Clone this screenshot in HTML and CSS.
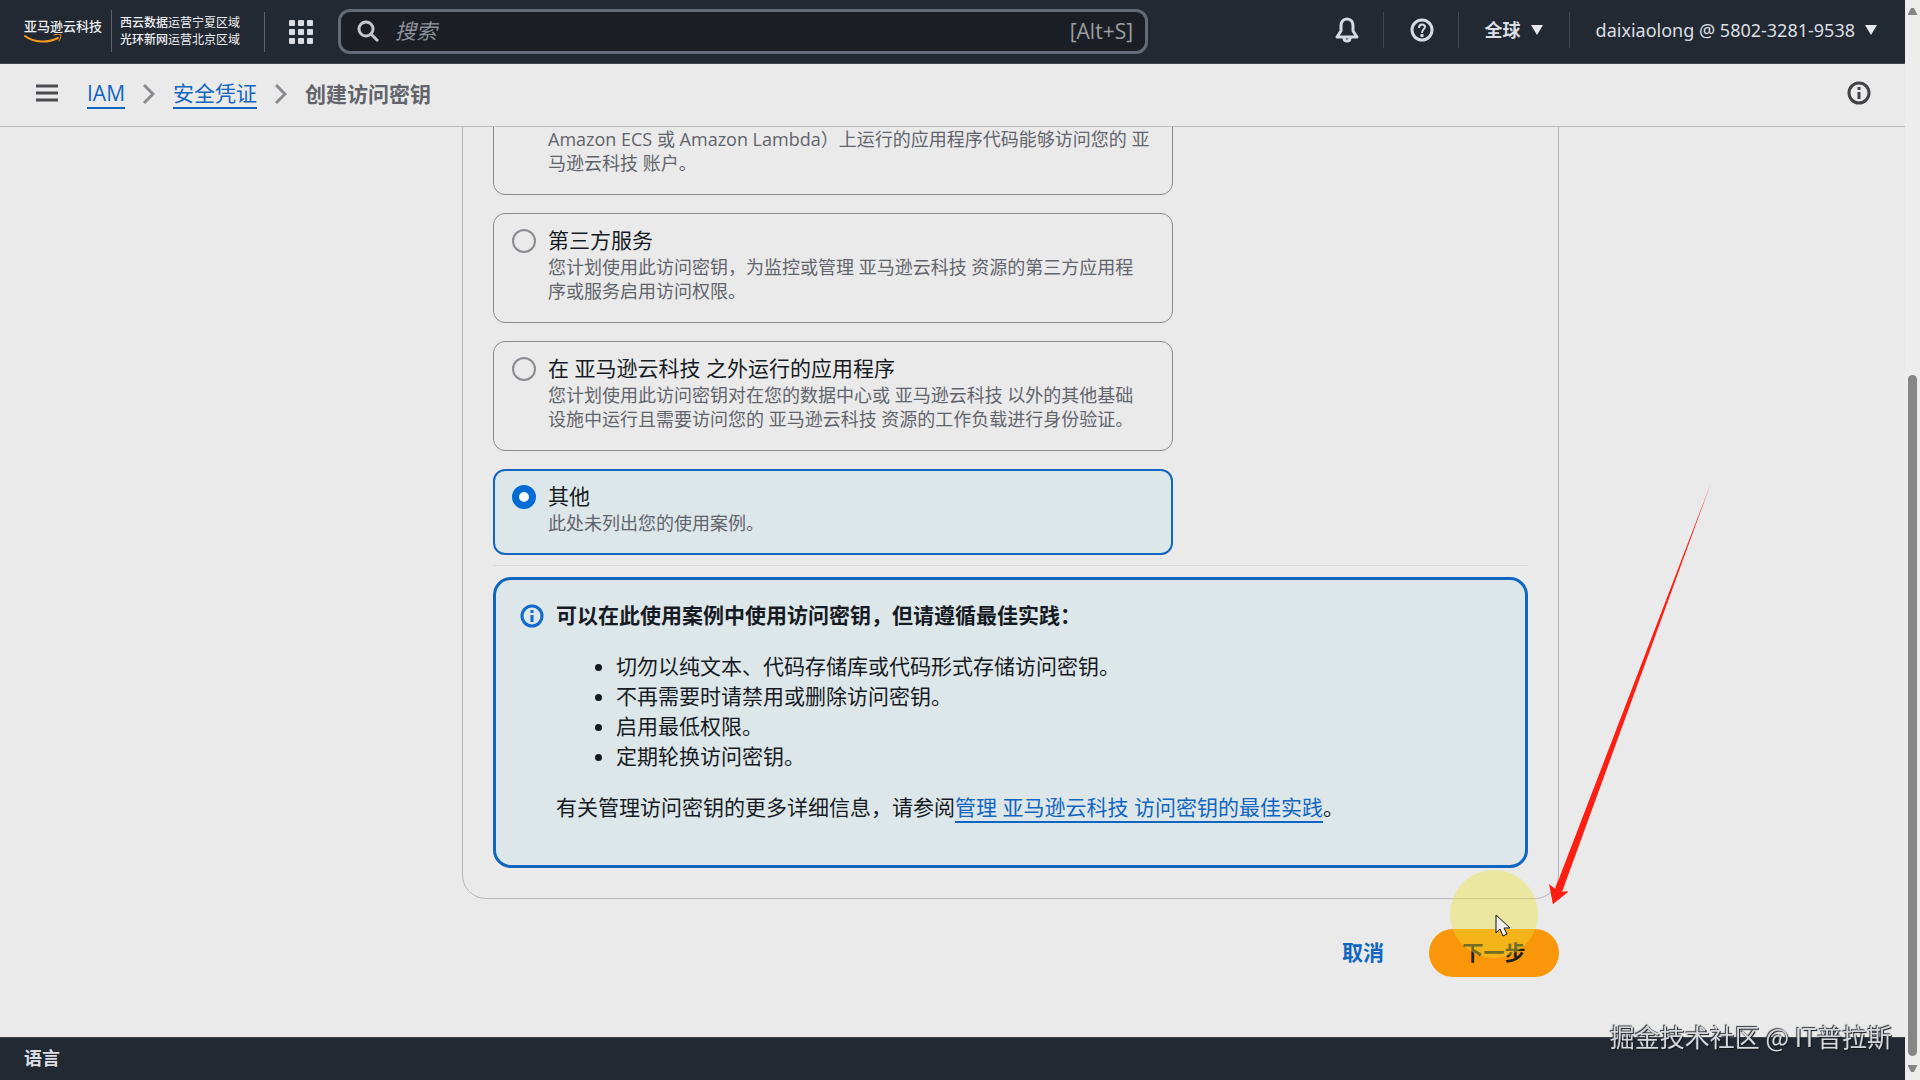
FILE: index.html
```html
<!DOCTYPE html>
<html lang="zh-CN">
<head>
<meta charset="UTF-8">
<meta name="viewport" content="width=device-width, initial-scale=1.0">
<title>创建访问密钥</title>
<link rel="stylesheet" href="styles.css">
</head>
<body>

<div class="page">
  <header class="topnav">
    <a class="brand" href="#">
      <span class="logo">
        亚马逊云科技
        <svg width="38" height="10" viewBox="0 0 38 10" fill="none" stroke="#f79a1b" stroke-linecap="round">
          <path d="M1 2C10 9 24 9 34 4" stroke-width="2"/>
          <path d="M30 1C33 0 36 0 37 1C37 3 36 5 35 7" stroke-width="1"/>
        </svg>
      </span>
      <span class="regions">
        <span><b>西云数据</b>运营宁夏区域</span>
        <span><b>光环新网</b>运营北京区域</span>
      </span>
    </a>
    <button class="nav-btn apps" aria-label="服务">
      <svg width="24" height="24" viewBox="0 0 24 24" fill="#d9dce3">
        <rect x="0" y="0" width="6" height="6" rx="1"/><rect x="9" y="0" width="6" height="6" rx="1"/><rect x="18" y="0" width="6" height="6" rx="1"/>
        <rect x="0" y="9" width="6" height="6" rx="1"/><rect x="9" y="9" width="6" height="6" rx="1"/><rect x="18" y="9" width="6" height="6" rx="1"/>
        <rect x="0" y="18" width="6" height="6" rx="1"/><rect x="9" y="18" width="6" height="6" rx="1"/><rect x="18" y="18" width="6" height="6" rx="1"/>
      </svg>
    </button>
    <div class="search">
      <svg width="22" height="22" viewBox="0 0 22 22" fill="none" stroke="#c3c6cc" stroke-width="3">
        <circle cx="9" cy="9" r="7"/><path d="M14 14L21 21"/>
      </svg>
      <input type="text" placeholder="搜索" aria-label="搜索">
      <span class="shortcut">[Alt+S]</span>
    </div>
    <div class="nav-right">
      <button class="nav-btn" aria-label="通知">
        <svg width="24" height="26" viewBox="0 0 24 26" fill="none" stroke="#d5dae3" stroke-width="3" stroke-linejoin="round">
          <path d="M12 2C8 2 6 5 6 9V14L2 20H22L18 14V9C18 5 16 2 12 2Z"/><path d="M9 21C9 25 15 25 15 21"/>
        </svg>
      </button>
      <button class="nav-btn" aria-label="帮助">
        <svg width="24" height="24" viewBox="0 0 24 24" fill="none" stroke="#d5dae3" stroke-width="3">
          <circle cx="12" cy="12" r="10"/><path d="M9 10C9 5 15 6 15 9C15 11 12 11 12 15" stroke-width="2"/><path d="M12 16V19"/>
        </svg>
      </button>
      <button class="nav-btn region"><b>全球</b>
        <svg width="12" height="10" viewBox="0 0 12 10"><path d="M0 0H12L6 10Z" fill="#e6e8ec"/></svg>
      </button>
      <button class="nav-btn account">daixiaolong @ 5802-3281-9538
        <svg width="12" height="10" viewBox="0 0 12 10"><path d="M0 0H12L6 10Z" fill="#e6e8ec"/></svg>
      </button>
    </div>
  </header>

  <nav class="crumbs" aria-label="导航">
    <button class="icon-btn menu" aria-label="菜单">
      <svg width="22" height="18" viewBox="0 0 22 18" stroke="#4a4a4f" stroke-width="3"><path d="M0 2H22M0 9H22M0 16H22"/></svg>
    </button>
    <a href="#">IAM</a>
    <svg class="chevron" width="12" height="20" viewBox="0 0 12 20"><path d="M1 1L10 10L1 19"/></svg>
    <a href="#">安全凭证</a>
    <svg class="chevron" width="12" height="20" viewBox="0 0 12 20"><path d="M1 1L10 10L1 19"/></svg>
    <span class="current">创建访问密钥</span>
    <button class="icon-btn info" aria-label="信息">
      <svg width="24" height="24" viewBox="0 0 24 24" fill="none" stroke="#424247" stroke-width="3">
        <circle cx="12" cy="12" r="10"/><path d="M12 6V9M12 11V18"/>
      </svg>
    </button>
  </nav>

  <main class="content">
    <form class="wizard">
      <section class="card">
        <div class="tiles">
          <div class="tile tile-plain">
            <p class="desc">Amazon ECS 或 Amazon Lambda）上运行的应用程序代码能够访问您的 亚马逊云科技 账户。</p>
          </div>
          <label class="tile">
            <input type="radio" name="usecase">
            <span class="tile-text">
              <span class="tile-title">第三方服务</span>
              <span class="desc">您计划使用此访问密钥，为监控或管理 亚马逊云科技 资源的第三方应用程序或服务启用访问权限。</span>
            </span>
          </label>
          <label class="tile">
            <input type="radio" name="usecase">
            <span class="tile-text">
              <span class="tile-title">在 亚马逊云科技 之外运行的应用程序</span>
              <span class="desc">您计划使用此访问密钥对在您的数据中心或 亚马逊云科技 以外的其他基础设施中运行且需要访问您的 亚马逊云科技 资源的工作负载进行身份验证。</span>
            </span>
          </label>
          <label class="tile selected">
            <input type="radio" name="usecase" checked>
            <span class="tile-text">
              <span class="tile-title">其他</span>
              <span class="desc">此处未列出您的使用案例。</span>
            </span>
          </label>
        </div>
        <hr class="divider">
        <div class="alert">
          <svg class="alert-icon" width="24" height="24" viewBox="0 0 24 24" fill="none" stroke="#0f6bcb" stroke-width="3">
            <circle cx="12" cy="12" r="10"/><path d="M12 6V9M12 11V18"/>
          </svg>
          <div class="alert-body">
            <h2>可以在此使用案例中使用访问密钥，但请遵循最佳实践：</h2>
            <ul>
              <li>切勿以纯文本、代码存储库或代码形式存储访问密钥。</li>
              <li>不再需要时请禁用或删除访问密钥。</li>
              <li>启用最低权限。</li>
              <li>定期轮换访问密钥。</li>
            </ul>
            <p>有关管理访问密钥的更多详细信息，请参阅<a href="#">管理 亚马逊云科技 访问密钥的最佳实践</a>。</p>
          </div>
        </div>
      </section>

      <div class="actions">
        <button type="button" class="btn btn-link">取消</button>
        <button type="button" class="btn btn-primary">下一步</button>
        <span class="halo"></span>
        <svg class="cursor" width="16" height="24" viewBox="0 0 16 24">
          <path d="M1 1V19L5 15L8 22L12 20L9 14H15Z" fill="#f1eff0" stroke="#1b1210" stroke-width="1"/>
        </svg>
        <svg class="arrow" width="164" height="424" viewBox="0 0 164 424">
          <path d="M163 1L14 410L20 410L5 422L2 403L7 407Z" fill="#ff1e12"/>
          <path d="M5 422L1 402L7 407L13 410L20 409Z" fill="#ff1e12"/>
        </svg>
      </div>
    </form>
  </main>

  <footer class="footer"><a href="#">语言</a></footer>
</div>

<div class="scrollbar">
  <svg width="9" height="9" viewBox="0 0 9 9"><path d="M3 1H6L9 7V8H0V7Z" fill="#868686"/></svg>
  <div class="track"><div class="thumb"></div></div>
  <svg width="9" height="9" viewBox="0 0 9 9"><path d="M0 1H9V2L6 8H3L0 2Z" fill="#868686"/></svg>
</div>

<div class="watermark">掘金技术社区 @ IT普拉斯</div>

</body>
</html>
```

FILE: styles.css
```css
* {
  box-sizing: border-box;
}
body {
  margin: 0;
  height: 100vh;
  display: flex;
  overflow: hidden;
  font-family: "Open Sans", "Noto Sans CJK SC", sans-serif;
  font-size: 21px;
  line-height: 30px;
  color: #161b23;
  background-color: #eaeaea;
}
button {
  font: inherit;
  border: none;
  background: none;
  padding: 0;
  cursor: pointer;
}
svg {
  display: block;
  flex-shrink: 0;
}
.page {
  flex: 1;
  min-width: 0;
  display: flex;
  flex-direction: column;
}

/* top navigation */
.topnav {
  height: 64px;
  flex-shrink: 0;
  display: flex;
  align-items: center;
  background-color: #222932;
  border-bottom: 1px solid #41454c;
  padding-left: 24px;
}
.brand {
  display: flex;
  align-items: center;
  padding-bottom: 2px;
  color: #eef0f3;
  text-decoration: none;
  white-space: nowrap;
}
.logo {
  font-size: 13px;
  line-height: 16px;
  font-weight: 500;
  padding-right: 9px;
}
.regions {
  display: flex;
  flex-direction: column;
  justify-content: center;
  height: 42px;
  padding-left: 8px;
  border-left: 1px solid #5c626c;
  font-size: 12px;
  line-height: 17px;
}
.regions b {
  font-weight: 500;
}
.apps {
  height: 40px;
  margin-left: 24px;
  padding: 0 25px 0 24px;
  border-left: 1px solid #5c626c;
}
.search {
  display: flex;
  align-items: center;
  gap: 16px;
  width: 810px;
  height: 45px;
  padding: 0 12px 2px 16px;
  background-color: #1b1f25;
  border: 3px solid #656b76;
  border-radius: 12px;
}
.search input {
  flex: 1;
  min-width: 0;
  border: none;
  outline: none;
  padding: 0;
  background: none;
  font: inherit;
  color: #e6e8ec;
}
.search input::placeholder {
  color: #8e929a;
  font-style: italic;
}
.shortcut {
  color: #9a9da3;
}
.nav-right {
  display: flex;
  align-items: center;
  margin-left: auto;
  padding: 0 4px 4px 0;
}
.nav-btn {
  color: #dcdfe5;
}
.nav-right .nav-btn {
  display: flex;
  align-items: center;
  gap: 10px;
  height: 36px;
  padding: 0 24px 0 26px;
  font-family: "Noto Sans", "Noto Sans CJK SC", sans-serif;
  font-size: 18px;
  white-space: nowrap;
}
.nav-right .region {
  padding-right: 26px;
}
.nav-right .nav-btn + .nav-btn {
  border-left: 1px solid #414852;
}

/* breadcrumbs */
.crumbs {
  height: 63px;
  flex-shrink: 0;
  display: flex;
  align-items: center;
  gap: 18px;
  padding: 0 34px 2px 36px;
  border-bottom: 1px solid #b9b9c0;
}
.crumbs a {
  color: #1166bf;
  line-height: 27px;
  text-decoration: none;
  border-bottom: 2px solid #1166bf;
}
.chevron {
  fill: none;
  stroke: #8a8a8f;
  stroke-width: 3;
}
.icon-btn {
  padding-bottom: 2px;
}
.menu {
  margin-right: 11px;
}
.current {
  color: #62646c;
  font-weight: 700;
}
.info {
  margin-left: auto;
}

/* the form sits scrolled to its end */
.content {
  flex: 1;
  min-height: 0;
  overflow: hidden;
  display: flex;
  flex-direction: column;
  justify-content: flex-end;
}
.wizard {
  width: 100%;
  max-width: 1213px;
  margin: 0 auto;
  padding: 0 0 60px 116px;
}
.card {
  padding: 30px;
  border: 1px solid #b7b7bd;
  border-radius: 24px;
}
.tiles {
  display: flex;
  flex-direction: column;
  gap: 18px;
  max-width: 680px;
}
.tile {
  display: flex;
  gap: 12px;
  padding: 11px 22px 19px 18px;
  border: 1px solid #8a8a91;
  border-radius: 12px;
}
.tile-plain {
  padding-left: 54px;
  padding-right: 12px;
}
.tile.selected {
  padding: 10px 21px 18px 17px;
  border: 2px solid #1166bf;
  background-color: #dde6e9;
}
.tile input {
  appearance: none;
  flex-shrink: 0;
  width: 24px;
  height: 24px;
  margin: 4px 0 0;
  border: 2px solid #8a8a91;
  border-radius: 50%;
}
.tile input:checked {
  border: 7px solid #006ad5;
  background-color: #f4f8fb;
}
.tile-title {
  display: block;
}
.desc {
  display: block;
  margin: 0;
  font-size: 18px;
  line-height: 24px;
  color: #62646c;
}
.divider {
  margin: 10px 0 11px;
  border: none;
  border-top: 1px solid #d8d8dc;
}
.alert {
  display: flex;
  gap: 12px;
  padding: 20px 24px 22px;
  border: 3px solid #1166bf;
  border-radius: 18px;
  background-color: #dde6e9;
}
.alert-icon {
  margin-top: 4px;
}
.alert h2 {
  margin: 0;
  font-size: 21px;
  font-weight: 700;
}
.alert ul {
  margin: 21px 0;
  padding-left: 60px;
}
.alert p {
  margin: 21px 0;
}
.alert a {
  color: #1166bf;
  text-decoration: none;
  border-bottom: 2px solid #1166bf;
}

/* buttons, with the pointer drawn over them */
.actions {
  position: relative;
  display: flex;
  justify-content: flex-end;
  gap: 12px;
  margin-top: 30px;
}
.btn {
  height: 48px;
  padding: 0 33px 2px;
  border-radius: 24px;
  font-weight: 700;
}
.btn-link {
  color: #1166bf;
}
.btn-primary {
  min-width: 130px;
  background-color: #fa960a;
  color: #21201c;
}
.halo {
  position: absolute;
  right: 21px;
  top: -59px;
  width: 88px;
  height: 88px;
  border-radius: 50%;
  background-color: rgba(238, 224, 50, 0.4);
}
.cursor {
  position: absolute;
  right: 48px;
  top: -15px;
}
.arrow {
  position: absolute;
  right: -153px;
  top: -447px;
}

.footer {
  height: 43px;
  flex-shrink: 0;
  display: flex;
  align-items: center;
  padding: 0 0 2px 24px;
  background-color: #222932;
  border-top: 1px solid #41454c;
}
.footer a {
  color: #dcdfe5;
  font-size: 18px;
  font-weight: 700;
  text-decoration: none;
}

.scrollbar {
  width: 15px;
  display: flex;
  flex-direction: column;
  align-items: center;
  gap: 8px;
  padding: 7px 0;
  background-color: #ededed;
}
.track {
  flex: 1;
  display: flex;
  flex-direction: column;
  justify-content: flex-end;
}
.thumb {
  width: 9px;
  height: 66%;
  border-radius: 5px;
  background-color: #868686;
}
.watermark {
  position: fixed;
  right: 28px;
  bottom: 26px;
  font-family: "Noto Sans CJK SC", sans-serif;
  font-size: 25px;
  line-height: 36px;
  color: #d5d8dc;
  text-shadow: -1px -1px 1px #33363b, 1px 1px 1px #111418;
}
```
